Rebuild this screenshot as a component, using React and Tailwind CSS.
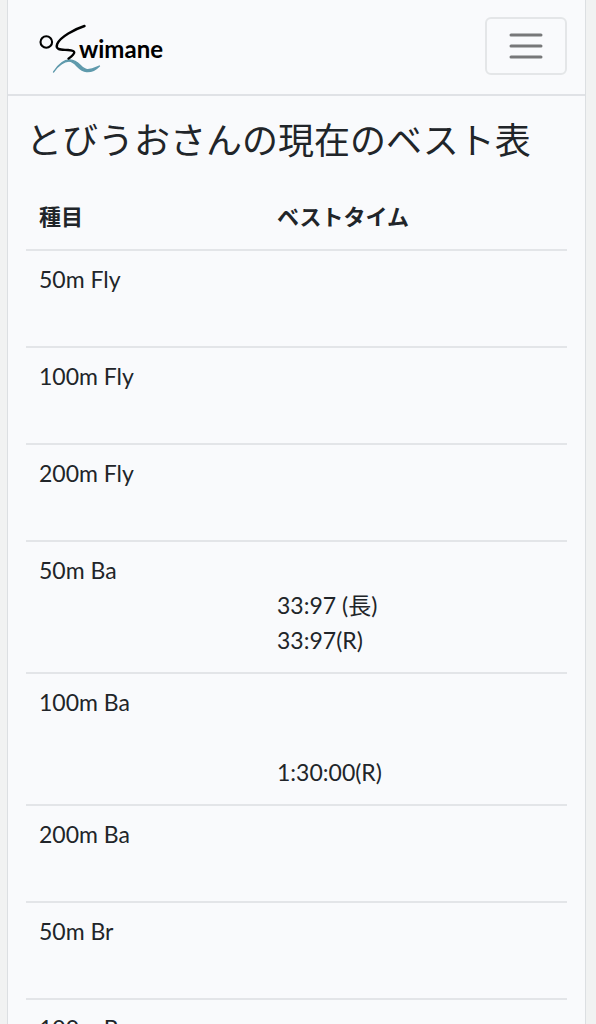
const bests = [
  { event: "50m Fly", times: [] },
  { event: "100m Fly", times: [] },
  { event: "200m Fly", times: [] },
  { event: "50m Ba", times: ["33:97 (長)", "33:97(R)"] },
  { event: "100m Ba", times: ["", "1:30:00(R)"] },
  { event: "200m Ba", times: [] },
  { event: "50m Br", times: [] },
  { event: "100m Br", times: [] },
];

function Logo() {
  return (
    <a href="#" className="block" aria-label="Swimane">
      <svg
        xmlns="http://www.w3.org/2000/svg"
        width="136"
        height="58"
        viewBox="0 -7 136 58"
        fill="none"
      >
        <circle cx="8.3" cy="18" r="5.8" stroke="#000" strokeWidth="2.1" />
        <path
          d="M15.500 48C21 39.500 27 35.700 32 35.900C41 36.200 43 45 49 45.600C54 46 58 43.500 61.500 42C57 46.500 53 48 48.500 47.600C40 47 38 37.300 31 37.200C26 37.200 20 42 15.500 48Z"
          fill="#5f9aac"
          stroke="#5f9aac"
          strokeWidth="1.3"
          strokeLinejoin="round"
        />
        <path
          d="M46.500 2C37 5 22 13 19.200 20C16.800 26.500 24 25.500 30 26C38.500 26.700 38 29 30.500 34.600"
          stroke="#000"
          strokeWidth="2.4"
          strokeLinecap="round"
        />
        <text
          x="41"
          y="34"
          fill="#000"
          className="font-[Lato,sans-serif] text-[24px] font-bold"
        >
          wimane
        </text>
      </svg>
    </a>
  );
}

function Navbar() {
  return (
    <nav className="flex items-center justify-between border-b-2 border-[#e0e2e6] pt-[17px] pr-[18px] pb-[19px] pl-[30px]">
      <Logo />
      <button
        type="button"
        aria-label="Toggle navigation"
        className="flex h-[58px] w-[82px] items-center justify-center rounded-md border-2 border-[#e4e6e8]"
      >
        <svg
          xmlns="http://www.w3.org/2000/svg"
          width="36"
          height="28"
          viewBox="0 0 36 28"
          stroke="#777879"
          strokeWidth="3"
          strokeLinecap="round"
        >
          <path d="M3 3h30M3 14h30M3 25h30" />
        </svg>
      </button>
    </nav>
  );
}

function App() {
  return (
    <div className="h-screen overflow-hidden bg-[#f1f2f2] pr-[10px] pl-[7px] font-[Lato,'Noto_Sans_CJK_JP',sans-serif] text-[#212529]">
      <div className="min-h-screen border-x border-[#dcdfe2] bg-[#f9fafc]">
        <Navbar />
        <main className="px-[18px]">
          <h1 className="pt-[22px] text-[36px] leading-[44px]">
            とびうおさんの現在のベスト表
          </h1>
          <table className="mt-[26px] w-full table-fixed text-[23px] leading-[35px]">
            <thead>
              <tr className="border-b-2 border-[#e3e5e8] text-left text-[22px]">
                <th className="w-[44%] px-[13px] pt-[11px] pb-[15px]">種目</th>
                <th className="px-[13px] pt-[11px] pb-[15px]">ベストタイム</th>
              </tr>
            </thead>
            <tbody>
              {bests.map(({ event, times }) => (
                <tr
                  key={event}
                  className="border-b-2 border-[#e3e5e8] align-top"
                >
                  <td className="px-[13px] pt-[11px] pb-[14px]">{event}</td>
                  <td className="px-[13px] pt-[11px] pb-[14px]">
                    <div className="h-[35px]"></div>
                    {times.length == 0 && <div className="h-[35px]"></div>}
                    {times.map((time, index) => (
                      <p key={index} className="h-[35px]">
                        {time}
                      </p>
                    ))}
                  </td>
                </tr>
              ))}
            </tbody>
          </table>
        </main>
      </div>
    </div>
  );
}

export default App;
